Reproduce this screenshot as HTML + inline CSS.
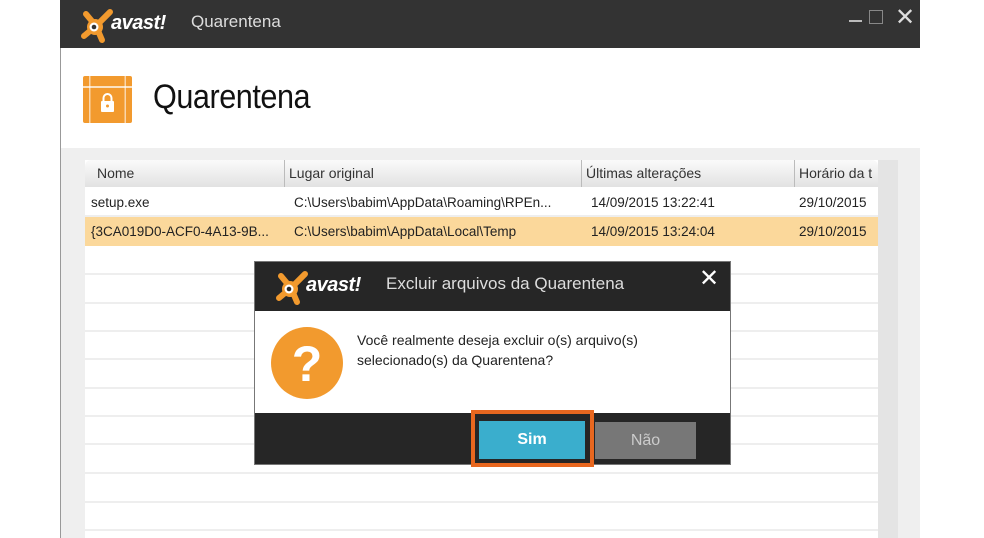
<!DOCTYPE html>
<html><head><meta charset="utf-8"><style>
*{margin:0;padding:0;box-sizing:border-box}
body{width:984px;height:538px;background:#fff;position:relative;overflow:hidden;font-family:"Liberation Sans","DejaVu Sans",sans-serif}
.abs{position:absolute}
.win{left:60px;top:0;width:860px;height:538px;border-left:1px solid #999;background:#fff}
.tb{left:60px;top:0;width:860px;height:48px;background:#333}
.t{color:#fff;white-space:nowrap}
.panel{left:61px;top:148px;width:859px;height:390px;background:#efefef}
.tbl{left:85px;top:160px;width:793px;height:378px;background:#fff;overflow:hidden}
.hdr{left:0;top:0;width:793px;height:27px;background:linear-gradient(#fafafa,#e2e2e2);border-radius:6px 6px 0 0}
.hdr span{position:absolute;top:5px;font-size:14px;color:#333}
.sep{position:absolute;top:0;width:1px;height:27px;background:#bbb}
.row{position:absolute;left:0;width:793px;height:29px;border-bottom:2px solid #eee;font-size:13.5px;color:#222}
.row span{position:absolute;top:7px;white-space:nowrap}
.scroll{left:878px;top:160px;width:20px;height:378px;background:#e4e4e4}
</style></head><body>
<div class="abs win"></div>
<div class="abs tb"></div>
<svg class="abs" style="left:80px;top:6px" width="40" height="38" viewBox="0 0 40 38">
<g fill="#f29a2e" stroke="#f29a2e" stroke-width="6" stroke-linecap="round">
<line x1="16" y1="20" x2="6" y2="8"/><line x1="16" y1="20" x2="30" y2="6"/><line x1="16" y1="20" x2="4" y2="30"/><line x1="16" y1="20" x2="22" y2="34"/></g>
<circle cx="15" cy="21" r="8" fill="#f29a2e"/><circle cx="14" cy="21" r="4.5" fill="#fff"/><circle cx="14" cy="21" r="2.3" fill="#333"/></svg>
<div class="abs t" style="left:111px;top:12px;font-size:20px;font-weight:bold;font-style:italic;letter-spacing:-0.5px">avast!</div>
<div class="abs t" style="left:191px;top:12px;font-size:17px;color:#ddd">Quarentena</div>
<div class="abs" style="left:849px;top:20px;width:13px;height:2px;background:#bbb"></div>
<div class="abs" style="left:869px;top:10px;width:14px;height:14px;border:1.5px solid #888"></div>
<div class="abs t" style="left:895px;top:3px;font-size:24px;color:#ddd">✕</div>
<svg class="abs" style="left:83px;top:76px" width="49" height="47" viewBox="0 0 49 47">
<rect x="0" y="0" width="49" height="47" rx="2" fill="#f29a2e"/>
<rect x="0" y="10" width="49" height="2" fill="#fff" opacity=".7"/>
<rect x="6" y="0" width="1.5" height="47" fill="#fff" opacity=".6"/><rect x="41.5" y="0" width="1.5" height="47" fill="#fff" opacity=".6"/>
<rect x="18" y="25" width="13" height="11" rx="1" fill="#fff"/><path d="M20.5 25v-3a4 4 0 0 1 8 0v3" stroke="#fff" stroke-width="2" fill="none"/><circle cx="24.5" cy="30" r="1.5" fill="#f29a2e"/></svg>
<div class="abs" style="left:153px;top:78px;font-size:34px;color:#111;transform:scaleX(.9);transform-origin:left;letter-spacing:-0.5px">Quarentena</div>
<div class="abs panel"></div>
<div class="abs tbl">
<div class="abs hdr"><span style="left:12px">Nome</span><div class="sep" style="left:199px"></div><span style="left:204px">Lugar original</span><div class="sep" style="left:496px"></div><span style="left:501px">Últimas alterações</span><div class="sep" style="left:709px"></div><span style="left:714px">Horário da t</span></div>
<div class="row" style="top:28px"><span style="left:6px">setup.exe</span><span style="left:209px">C:\Users\babim\AppData\Roaming\RPEn...</span><span style="left:506px">14/09/2015 13:22:41</span><span style="left:714px">29/10/2015</span></div>
<div class="row" style="top:57px;background:#fbd89b;border-bottom-color:#fbd89b"><span style="left:6px">{3CA019D0-ACF0-4A13-9B...</span><span style="left:209px">C:\Users\babim\AppData\Local\Temp</span><span style="left:506px">14/09/2015 13:24:04</span><span style="left:714px">29/10/2015</span></div>
<div class="row" style="top:86px"></div><div class="row" style="top:115px"></div><div class="row" style="top:143px"></div><div class="row" style="top:171px"></div><div class="row" style="top:200px"></div><div class="row" style="top:228px"></div><div class="row" style="top:256px"></div><div class="row" style="top:285px"></div><div class="row" style="top:314px"></div><div class="row" style="top:342px"></div>
</div>
<div class="abs scroll"></div>
<div class="abs" style="left:254px;top:261px;width:477px;height:204px;background:#fff;border:1px solid #777"></div>
<div class="abs" style="left:255px;top:262px;width:475px;height:49px;background:#262626"></div>
<svg class="abs" style="left:275px;top:268px" width="40" height="38" viewBox="0 0 40 38">
<g stroke="#f29a2e" stroke-width="6" stroke-linecap="round">
<line x1="16" y1="20" x2="6" y2="8"/><line x1="16" y1="20" x2="30" y2="6"/><line x1="16" y1="20" x2="4" y2="30"/><line x1="16" y1="20" x2="22" y2="34"/></g>
<circle cx="15" cy="21" r="8" fill="#f29a2e"/><circle cx="14" cy="21" r="4.5" fill="#fff"/><circle cx="14" cy="21" r="2.3" fill="#262626"/></svg>
<div class="abs t" style="left:306px;top:274px;font-size:20px;font-weight:bold;font-style:italic;letter-spacing:-0.5px">avast!</div>
<div class="abs t" style="left:386px;top:274px;font-size:17px;color:#ddd">Excluir arquivos da Quarentena</div>
<div class="abs t" style="left:699px;top:264px;font-size:24px">✕</div>
<div class="abs" style="left:271px;top:327px;width:72px;height:72px;border-radius:50%;background:#f29a2e;color:#fff;font-size:50px;font-weight:bold;text-align:center;line-height:74px">?</div>
<div class="abs" style="left:357px;top:330px;font-size:14px;color:#222;line-height:20px">Você realmente deseja excluir o(s) arquivo(s)<br>selecionado(s) da Quarentena?</div>
<div class="abs" style="left:255px;top:413px;width:475px;height:51px;background:#262626"></div>
<div class="abs" style="left:471px;top:410px;width:123px;height:57px;border:4px solid #e8671f"></div>
<div class="abs" style="left:479px;top:421px;width:106px;height:38px;background:#3aaecd;color:#fff;font-size:16px;font-weight:bold;text-align:center;line-height:38px">Sim</div>
<div class="abs" style="left:595px;top:422px;width:101px;height:37px;background:#777;color:#ccc;font-size:16px;text-align:center;line-height:37px">Não</div>
</body></html>
